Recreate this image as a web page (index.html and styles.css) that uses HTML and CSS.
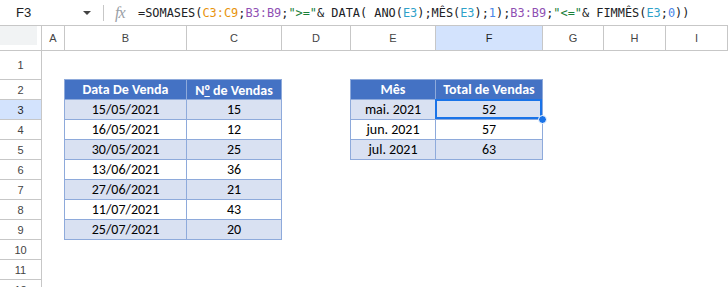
FILE: index.html
```html
<!DOCTYPE html>
<html lang="pt-BR">
<head>
    <meta charset="UTF-8">
    <title>SOMASES por mês</title>
    <link rel="stylesheet" href="styles.css">
</head>
<body>
    <div class="formula-bar">
        <div class="name-box">F3</div>
        <div class="name-caret"></div>
        <div class="bar-sep"></div>
        <div class="fx">fx</div>
        <div class="formula">=SOMASES(<span class="ref-c">C3:C9</span>;<span class="ref-b">B3:B9</span>;<span class="str">"&gt;="</span>&amp; DATA( ANO(<span class="ref-e">E3</span>);MÊS(<span class="ref-e">E3</span>);<span class="num">1</span>);<span class="ref-b">B3:B9</span>;<span class="str">"&lt;="</span>&amp; FIMMÊS(<span class="ref-e">E3</span>;<span class="num">0</span>))</div>
    </div>

    <div class="sheet-head">
        <div class="corner"><span></span></div>
        <div class="col-head">A</div>
        <div class="col-head">B</div>
        <div class="col-head">C</div>
        <div class="col-head">D</div>
        <div class="col-head">E</div>
        <div class="col-head active">F</div>
        <div class="col-head">G</div>
        <div class="col-head">H</div>
        <div class="col-head">I</div>
    </div>

    <div class="sheet-body">
        <div class="row-heads">
            <div class="row-head first">1</div>
            <div class="row-head">2</div>
            <div class="row-head active">3</div>
            <div class="row-head">4</div>
            <div class="row-head">5</div>
            <div class="row-head">6</div>
            <div class="row-head">7</div>
            <div class="row-head">8</div>
            <div class="row-head">9</div>
            <div class="row-head">10</div>
            <div class="row-head">11</div>
            <div class="row-head">12</div>
        </div>

        <div class="data-table sales-table">
            <div class="cell head">Data De Venda</div>
            <div class="cell head"><span>N<span class="ordinal">º</span> de Vendas</span></div>
            <div class="cell band">15/05/2021</div>
            <div class="cell band">15</div>
            <div class="cell">16/05/2021</div>
            <div class="cell">12</div>
            <div class="cell band">30/05/2021</div>
            <div class="cell band">25</div>
            <div class="cell">13/06/2021</div>
            <div class="cell">36</div>
            <div class="cell band">27/06/2021</div>
            <div class="cell band">21</div>
            <div class="cell">11/07/2021</div>
            <div class="cell">43</div>
            <div class="cell band">25/07/2021</div>
            <div class="cell band">20</div>
        </div>

        <div class="data-table month-table">
            <div class="cell head">Mês</div>
            <div class="cell head">Total de Vendas</div>
            <div class="cell band">mai. 2021</div>
            <div class="cell band selected">52</div>
            <div class="cell">jun. 2021</div>
            <div class="cell">57</div>
            <div class="cell band">jul. 2021</div>
            <div class="cell band">63</div>
        </div>
    </div>
</body>
</html>
```

FILE: styles.css
```css
:root {
    --grid-line: #c7c7c7;
    --head-text: #444;
    --active-head: #d3e3fd;
    --table-line: #8eaadb;
    --table-head: #4472c4;
    --table-band: #d9e1f2;
    --select: #1a73e8;
}

body {
    margin: 0;
    width: 728px;
    height: 287px;
    overflow: hidden;
    background: #fff;
    font-family: 'Liberation Sans', Arial, sans-serif;
    color: #202124;
}

/* formula bar */
.formula-bar {
    height: 25px;
    border-bottom: 1px solid var(--grid-line);
    display: flex;
    align-items: center;
}

.name-box {
    width: 67px;
    padding-left: 16px;
    font-size: 13px;
}

.name-caret {
    width: 0;
    height: 0;
    border-left: 4px solid transparent;
    border-right: 4px solid transparent;
    border-top: 4px solid #444;
    margin-right: 12px;
}

.bar-sep {
    width: 1px;
    height: 16px;
    background: var(--grid-line);
    margin-right: 11px;
}

.fx {
    font-family: 'Liberation Serif', serif;
    font-style: italic;
    font-size: 16px;
    color: #9aa0a6;
    width: 23px;
    letter-spacing: -1px;
}

.formula {
    font-family: 'DejaVu Sans Mono', 'Liberation Mono', monospace;
    font-size: 11.9px;
    white-space: pre;
    color: #202124;
}

.ref-c { color: #e8930c; }
.ref-b { color: #8f4fb3; }
.ref-e { color: #2ea1c9; }
.str { color: #188038; }
.num { color: #4a86e8; }

/* column headers */
.sheet-head,
.sheet-body {
    display: grid;
    grid-template-columns: 42px 23px 122px 95px 69px 85px 107px 61px 62px 62px;
}

.sheet-head {
    height: 25px;
}

.corner,
.col-head {
    box-sizing: border-box;
    border-right: 1px solid var(--grid-line);
    border-bottom: 1px solid var(--grid-line);
}

.corner span {
    display: block;
    width: 37px;
    height: 19px;
    background: #f1f3f4;
}

.col-head {
    display: flex;
    align-items: center;
    justify-content: center;
    font-size: 11px;
    color: var(--head-text);
}

.col-head.active,
.row-head.active {
    background: var(--active-head);
    color: #1f1f1f;
}

/* sheet body */
.sheet-body {
    grid-template-rows: 29px repeat(11, 20px);
}

.row-heads {
    grid-column: 1;
    grid-row: 1 / -1;
    display: flex;
    flex-direction: column;
}

.row-head {
    box-sizing: border-box;
    height: 20px;
    flex: none;
    border-right: 1px solid var(--grid-line);
    border-bottom: 1px solid var(--grid-line);
    display: flex;
    align-items: center;
    justify-content: center;
    font-size: 11px;
    color: var(--head-text);
}

.row-head.first {
    height: 29px;
}

/* bordered tables */
.data-table {
    display: grid;
    grid-auto-rows: 20px;
    align-self: start;
    justify-self: start;
    margin: -1px 0 0 -1px;
    border-top: 1px solid var(--table-line);
    border-left: 1px solid var(--table-line);
    font-family: Carlito, Calibri, Lato, sans-serif;
    font-size: 14px;
    color: #000;
}

.sales-table {
    grid-column: 3 / 5;
    grid-row: 2 / 10;
    grid-template-columns: 122px 95px;
}

.month-table {
    grid-column: 6 / 8;
    grid-row: 2 / 6;
    grid-template-columns: 85px 107px;
}

.cell {
    box-sizing: border-box;
    border-right: 1px solid var(--table-line);
    border-bottom: 1px solid var(--table-line);
    display: flex;
    align-items: center;
    justify-content: center;
    white-space: nowrap;
}

.cell.head {
    background: var(--table-head);
    color: #fff;
    font-weight: bold;
}

.ordinal {
    font-family: 'Open Sans', sans-serif;
    text-decoration: underline;
    text-underline-offset: 1px;
}

.cell.band {
    background: var(--table-band);
}

.cell.selected {
    position: relative;
}

.cell.selected::before {
    content: "";
    position: absolute;
    top: -1px;
    left: -1px;
    right: 0;
    bottom: 0;
    border: 2px solid var(--select);
}

.cell.selected::after {
    content: "";
    position: absolute;
    right: -5px;
    bottom: -5px;
    width: 7px;
    height: 7px;
    border-radius: 50%;
    background: var(--select);
    border: 1px solid #fff;
}
```
